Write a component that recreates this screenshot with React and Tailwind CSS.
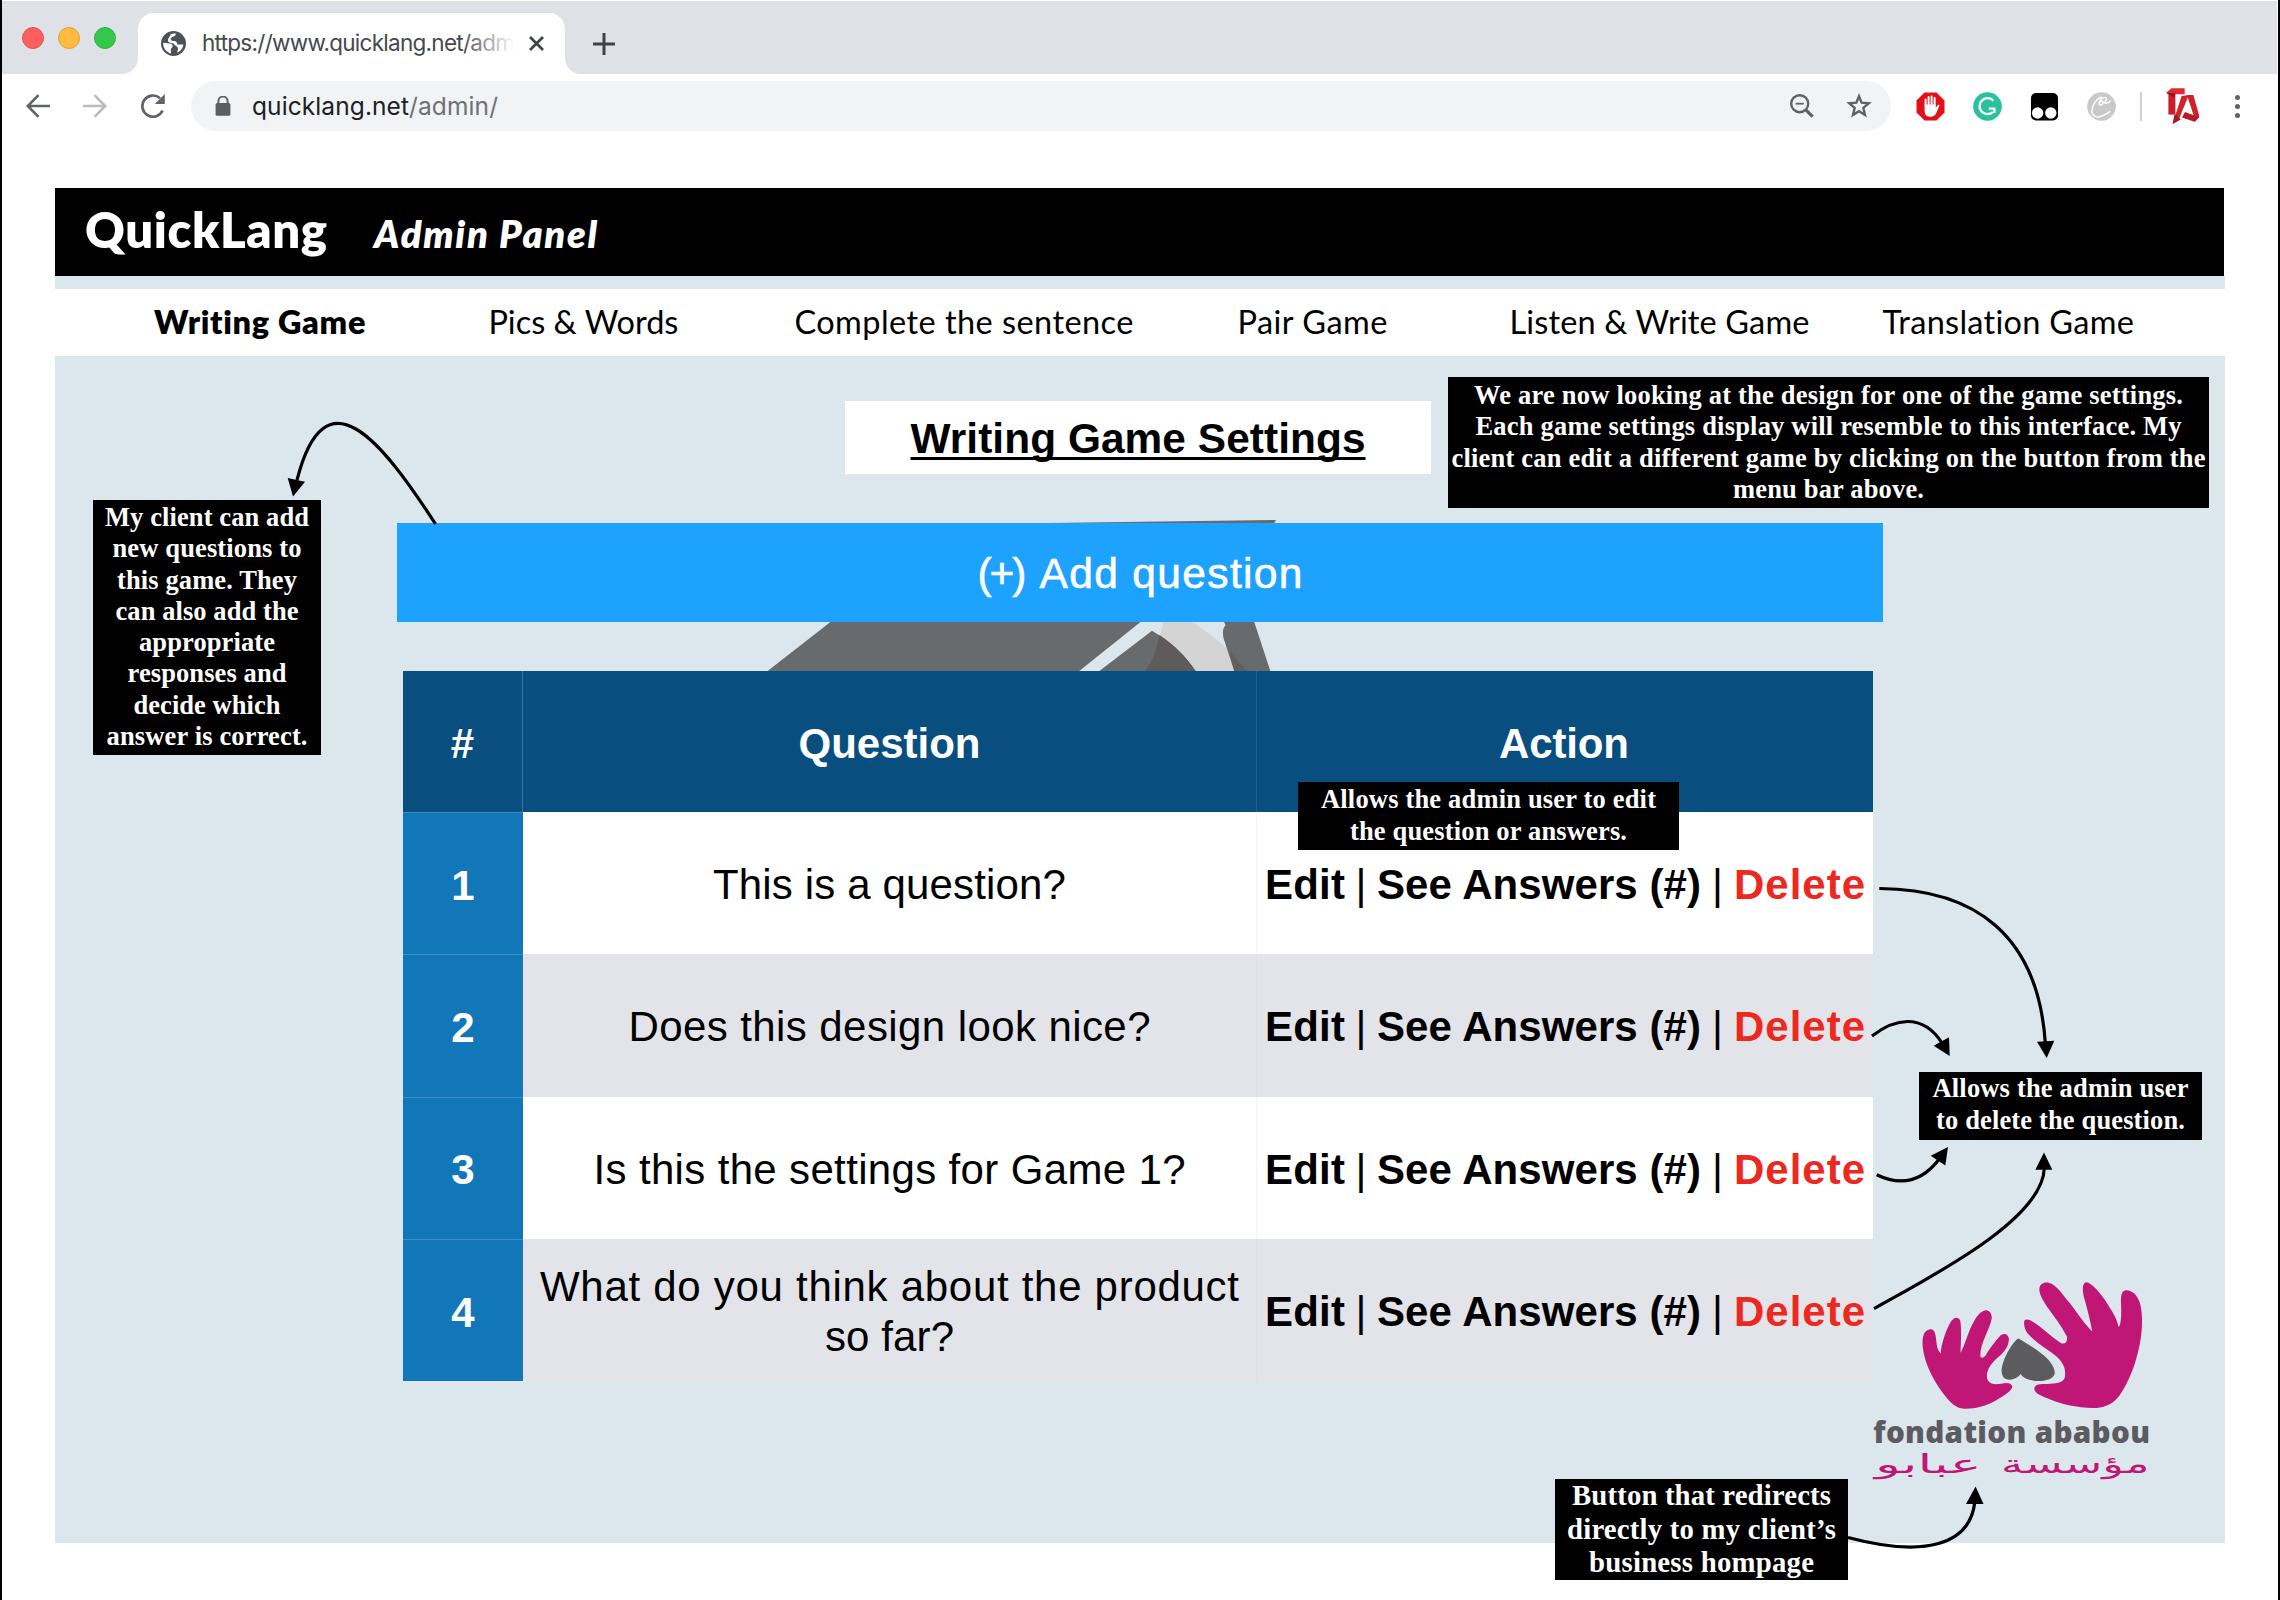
import React, { useLayoutEffect, useRef } from "react";

/* One line of text, tracked so that it spans exactly `w` pixels. */
function Line({ w, className = "", children }) {
  const ref = useRef(null);
  useLayoutEffect(() => {
    const el = ref.current;
    el.style.letterSpacing = "0px";
    el.style.marginRight = "0px";
    const natural = el.getBoundingClientRect().width;
    const gap = (w - natural) / (el.textContent.length - 1);
    el.style.letterSpacing = `${gap}px`;
    el.style.marginRight = `${-gap}px`;
  }, [w]);
  return (
    <span ref={ref} className={`inline-block whitespace-nowrap ${className}`}>
      {children}
    </span>
  );
}

function TabStrip() {
  return (
    <div className="mt-px flex h-[73px] items-end bg-[#dee1e6]">
      <div className="flex h-full w-[136px] items-center gap-[14px] pl-5">
        <span className="size-[22px] rounded-full border border-[#e2504a] bg-[#fc605c]" />
        <span className="size-[22px] rounded-full border border-[#e0a030] bg-[#fdbc40]" />
        <span className="size-[22px] rounded-full border border-[#2bb03c] bg-[#34c84a]" />
      </div>
      <div className="relative flex h-[61px] w-[427px] items-center rounded-t-[16px] bg-white pl-[23px]">
        <svg className="absolute bottom-0 -left-4 size-4" viewBox="0 0 16 16">
          <path d="M16 0V16H0A16 16 0 0 0 16 0Z" fill="#fff" />
        </svg>
        <svg className="absolute -right-4 bottom-0 size-4" viewBox="0 0 16 16">
          <path d="M0 0V16H16A16 16 0 0 1 0 0Z" fill="#fff" />
        </svg>
        <svg className="size-[25px]" viewBox="0 0 25 25">
          <circle cx="12.5" cy="12.5" r="12.5" fill="#4d5157" />
          <path
            d="M2.2 11.8L8.6 12.4C11 12.6 12.2 14 11.6 15.6C11 17 9.6 17.6 9.8 19.4L10 22.4C5.6 21.4 2.2 17.4 2.2 12.5Z"
            fill="#fff"
          />
          <path
            d="M14.8 2.6C14.6 5.4 12.4 5.6 11.4 6C9.8 6.8 9.2 8 10 9.2C11 10.4 13.4 9.4 15 10.4C16.2 11.4 15.6 12.8 17 13.4C18.6 14 20 13 22.4 13.6C22 17.4 19.6 20.4 16.4 21.8C16 19.8 17.4 18.6 17 17C16.4 15.4 14.4 15 13.6 13.8C12.6 12.2 10.6 12.4 8.6 11.6C7 10.8 6.6 9 7.4 7.4C8.2 5.8 9.6 5 9.8 3C11.4 2.4 13 2.3 14.8 2.6Z"
            fill="#fff"
          />
        </svg>
        <div className="relative ml-[16px] w-[312px] overflow-hidden text-[22.5px] leading-[30px] text-[#45494d]">
          <Line w={313} className="font-[Inter,sans-serif]">
            https://www.quicklang.net/adm
          </Line>
          <div className="absolute inset-y-0 right-0 w-[52px] bg-gradient-to-r from-white/0 to-white" />
        </div>
        <svg className="ml-[15px] size-[15px]" viewBox="0 0 15 15">
          <path d="M1 1L14 14M14 1L1 14" stroke="#3f4347" strokeWidth="2.7" />
        </svg>
      </div>
      <svg className="mb-[19px] ml-[28px] size-[22px]" viewBox="0 0 22 22">
        <path d="M11 0V22M0 11H22" stroke="#3f4347" strokeWidth="3" />
      </svg>
    </div>
  );
}

function Toolbar() {
  return (
    <div className="flex h-[64px] items-center bg-white">
      <svg className="ml-[24px] size-6" viewBox="0 0 24 24" fill="none" stroke="#5f6368" strokeWidth="2.6">
        <path d="M24 12H3M12.5 1.2L1.8 12L12.5 22.8" />
      </svg>
      <svg className="ml-[33px] size-6" viewBox="0 0 24 24" fill="none" stroke="#babcbe" strokeWidth="2.6">
        <path d="M0 12H21M11.5 1.2L22.2 12L11.5 22.8" />
      </svg>
      <svg className="ml-[33px] size-[26px]" viewBox="0 0 26 26">
        <path d="M22.6 17.5A10.6 10.6 0 1 1 20 5.2" fill="none" stroke="#5f6368" strokeWidth="2.7" />
        <path d="M24.8 1V11H14.8Z" fill="#5f6368" />
      </svg>
      <div className="ml-[25px] flex h-[50px] w-[1700px] items-center rounded-full bg-[#f1f3f4] pl-[22px]">
        <svg className="size-[20px]" viewBox="0 0 20 20">
          <path d="M5.4 9V5.2a4.6 4.6 0 0 1 9.2 0V9" fill="none" stroke="#5f6368" strokeWidth="2" />
          <rect x="2.6" y="7" width="14.8" height="12.8" rx="1.6" fill="#5b5d60" />
        </svg>
        <div className="ml-[19px] font-[Inter,sans-serif] text-[24.5px] leading-8">
          <Line w={157} className="text-[#202124]">quicklang.net</Line>
          <Line w={89} className="text-[#6d7175]">/admin/</Line>
        </div>
        <svg className="ml-auto size-[24px]" viewBox="0 0 24 24" fill="none" stroke="#5f6368">
          <circle cx="9.7" cy="9.7" r="8.5" strokeWidth="2.4" />
          <path d="M15.6 15.6L22.6 22.6" strokeWidth="3.2" />
          <path d="M5.6 9.7H13.8" strokeWidth="1.8" />
        </svg>
        <svg className="mr-[19px] ml-[32px] size-[26px]" viewBox="0 0 26 26">
          <path
            d="M13 3.2L15.6 9.7L22.8 10.3L17.3 14.9L19 22L13 18.2L7 22L8.7 14.9L3.2 10.3L10.4 9.7Z"
            fill="none"
            stroke="#5f6368"
            strokeWidth="2.4"
          />
        </svg>
      </div>
      <svg className="ml-[25px] size-[29px]" viewBox="0 0 29 29">
        <path d="M8.5 .5H20.5L28.5 8.5V20.5L20.5 28.5H8.5L.5 20.5V8.5Z" fill="#e3101a" />
        <path
          d="M9.6 14.5V7.6M12.6 14V5M15.6 14V4.4M18.6 15V6"
          stroke="#fff"
          strokeWidth="2"
          strokeLinecap="round"
        />
        <path d="M8.6 12.5H19.6V15.6L22.6 12.4L23.6 13.2L20.4 20.8Q18.8 24.8 14.4 24.8Q8.6 24.8 8.6 19Z" fill="#fff" />
      </svg>
      <svg className="ml-[28px] size-[29px]" viewBox="0 0 29 29">
        <circle cx="14.5" cy="14.5" r="14.3" fill="#28c39c" />
        <path
          d="M20.4 8.8A8 8 0 1 0 19.8 20.2M15.8 16.6H21.4V21"
          fill="none"
          stroke="#fff"
          strokeWidth="2.3"
        />
      </svg>
      <svg className="ml-[28px] size-[29px]" viewBox="0 0 29 29">
        <rect x="1" y="1" width="27" height="27.5" rx="5" fill="#000" />
        <circle cx="7.6" cy="21" r="5.7" fill="#fff" />
        <circle cx="20.8" cy="21" r="5.7" fill="#fff" />
      </svg>
      <svg className="ml-[28px] size-[29px]" viewBox="0 0 29 29">
        <circle cx="14.5" cy="14.5" r="14.3" fill="#c9c9c9" />
        <path
          d="M12.6 11.4C12.6 8.8 15.4 8.2 16 10C16.6 12.4 13.4 14 12 12.4C11.2 9.6 15 5.4 18.2 5.4C20.2 5.6 19.4 8.6 17.4 10.8C20 11.6 22.6 10.2 23.8 8.4M15.2 5C9 6.4 4.8 14 5 19.4C5.4 25.4 11.2 26.2 16.4 23.4C19.4 22 21.6 20.6 23.4 19.4"
          fill="none"
          stroke="#fff"
          strokeWidth="1.4"
        />
      </svg>
      <div className="ml-[24px] h-[29px] w-[2px] bg-[#cfd1d4]" />
      <svg className="ml-[24px] h-[38px] w-[34px]" viewBox="0 0 34 38">
        <path d="M.5 5.4L5.4 1.2H18.6V7.2H1.6Z" fill="#dd2a34" />
        <path d="M2.4 7H9.4V27.6H2.4Z" fill="#c81f2b" />
        <path d="M.5 5.6L8 10.2L9.4 6.8Z" fill="#8f131c" />
        <path d="M15.6 9L22.8 8L12.6 33L6.6 37Z" fill="#d4222d" />
        <path d="M6.6 37L8.6 26.8L14.8 32.6Z" fill="#a91722" />
        <path d="M21 8H27.4L33.4 29.6L28.8 34.8L27.2 27Z" fill="#cf202c" />
        <path d="M19 25L33.2 30.2L28.6 34.8L16 30.4Z" fill="#b71925" />
      </svg>
      <div className="ml-[35px] flex flex-col gap-[4px]">
        <span className="size-[5px] rounded-full bg-[#5f6368]" />
        <span className="size-[5px] rounded-full bg-[#5f6368]" />
        <span className="size-[5px] rounded-full bg-[#5f6368]" />
      </div>
    </div>
  );
}

function SiteHeader() {
  return (
    <header className="mr-[54px] ml-[53px] mt-[50px] bg-black">
      <div className="flex h-[88px] items-baseline pt-[11px] pl-[30px] font-[Lato,sans-serif] font-extrabold text-white">
        <Line w={242} className="text-[49px] leading-[60px]">QuickLang</Line>
        <Line w={223} className="ml-[47px] text-[38px] leading-[48px] italic">Admin Panel</Line>
      </div>
    </header>
  );
}

const games = [
  { label: "Writing Game", w: 212, cls: "ml-[99px] font-extrabold" },
  { label: "Pics & Words", w: 190, cls: "ml-[123px]" },
  { label: "Complete the sentence", w: 339, cls: "ml-[116px]" },
  { label: "Pair Game", w: 150, cls: "ml-[104px]" },
  { label: "Listen & Write Game", w: 300, cls: "ml-[122px]" },
  { label: "Translation Game", w: 252, cls: "ml-[73px]" },
];

function GameNav() {
  return (
    <nav className="flex h-[67px] items-center bg-white pb-[1px] font-[Lato,sans-serif] text-[32.5px] text-black">
      {games.map((g) => (
        <div key={g.label} className={g.cls}>
          <Line w={g.w}>{g.label}</Line>
        </div>
      ))}
    </nav>
  );
}

/* Graduation cap that shows between the button and the table. */
function Backdrop() {
  return (
    <svg className="absolute top-[160px] left-[690px] h-[160px] w-[540px]" viewBox="745 516 540 160">
      <path d="M1050 523L1276 520L1273 525H1050Z" fill="#676b6e" />
      <path d="M833 620H1143L1078.6 671.5H767Z" fill="#676b6e" />
      <path d="M1163.4 620H1190C1210 634 1232 650 1248 672H1145C1153 658 1159 645 1163.4 620Z" fill="#d5d4d5" />
      <path d="M1152 630.7C1168 640 1184 654 1196 671.5H1098.7Z" fill="#676b6e" />
      <path d="M1159.5 635C1156 652 1152 662 1145 671.5H1196C1186 656 1174 645 1159.5 635Z" fill="#5f5b5a" />
      <path d="M1223 620H1253.6L1270.5 671.5H1234.4L1223.5 638C1222.4 632 1223 628 1225.5 625Z" fill="#676b6e" />
      <path d="M1229 650L1247 671.5H1234.4Z" fill="#615e5e" />
    </svg>
  );
}

const questions = [
  [["This is a question?", 353]],
  [["Does this design look nice?", 522]],
  [["Is this the settings for Game 1?", 592]],
  [
    ["What do you think about the product", 699],
    ["so far?", 129],
  ],
];

function QuestionTable() {
  return (
    <div className="mt-[49px] ml-[348px] w-[1470px] text-[42px] leading-[50px]">
      <div className="grid h-[141px] grid-cols-[120px_734px_616px] items-stretch bg-[#084f80] font-bold text-white">
        <div className="flex items-center justify-center border-r border-[#3a739a] pt-1">#</div>
        <div className="flex items-center justify-center border-r border-[#235f8a] pt-1">
          <Line w={182}>Question</Line>
        </div>
        <div className="flex items-center justify-center pt-1 pr-[2px]">
          <Line w={130}>Action</Line>
        </div>
      </div>
      {questions.map((lines, i) => (
        <div key={i} className="grid h-[142.3px] grid-cols-[120px_734px_616px]">
          <div className="flex items-center justify-center border-t border-[#3f8fc6] bg-[#1177b9] pt-1 font-bold text-white">
            {i + 1}
          </div>
          <div
            className={`flex flex-col items-center justify-center border-r pt-1 text-black ${
              i % 2 ? "border-[#dfe0e5] bg-[#e3e4e9]" : "border-[#f5f5f7] bg-white"
            }`}
          >
            {lines.map(([text, w]) => (
              <Line key={text} w={w}>{text}</Line>
            ))}
          </div>
          <div
            className={`flex items-center pt-1 pl-[8px] font-bold text-black ${
              i % 2 ? "bg-[#e3e4e9]" : "bg-white"
            }`}
          >
            <Line w={80}>Edit</Line>
            <span className="w-[32px] text-center font-normal">|</span>
            <Line w={324}>See Answers (#)</Line>
            <span className="w-[33px] text-center font-normal">|</span>
            <Line w={131} className="text-[#ec281f]">Delete</Line>
          </div>
        </div>
      ))}
    </div>
  );
}

function Note({ className, lines }) {
  return (
    <div
      className={`absolute flex flex-col items-center bg-black font-['Liberation_Serif',serif] font-bold text-white ${className}`}
    >
      {lines.map(([text, w]) => (
        <Line key={text} w={w}>{text}</Line>
      ))}
    </div>
  );
}

function Notes() {
  return (
    <>
      <Note
        className="top-[500px] left-[93px] h-[255px] w-[228px] pt-[2px] text-[26.5px] leading-[31.3px]"
        lines={[
          ["My client can add", 204],
          ["new questions to", 189],
          ["this game. They", 180],
          ["can also add the", 183],
          ["appropriate", 136],
          ["responses and", 159],
          ["decide which", 147],
          ["answer is correct.", 201],
        ]}
      />
      <Note
        className="top-[377px] left-[1448px] h-[131px] w-[761px] pt-[3px] text-[26.5px] leading-[31.4px]"
        lines={[
          ["We are now looking at the design for one of the game settings.", 709],
          ["Each game settings display will resemble to this interface. My", 706],
          ["client can edit a different game by clicking on the button from the", 754],
          ["menu bar above.", 191],
        ]}
      />
      <Note
        className="top-[782px] left-[1298px] h-[68px] w-[381px] pt-[2px] text-[26.5px] leading-[31.5px]"
        lines={[
          ["Allows the admin user to edit", 335],
          ["the question or answers.", 277],
        ]}
      />
      <Note
        className="top-[1072px] left-[1919px] h-[68px] w-[283px] pt-[1px] text-[26.5px] leading-[31.5px]"
        lines={[
          ["Allows the admin user", 256],
          ["to delete the question.", 249],
        ]}
      />
      <Note
        className="top-[1479px] left-[1555px] h-[101px] w-[293px] text-[28.8px] leading-[33.5px]"
        lines={[
          ["Button that redirects", 259],
          ["directly to my client’s", 269],
          ["business hompage", 225],
        ]}
      />
    </>
  );
}

function Arrows() {
  return (
    <svg className="pointer-events-none absolute top-0 left-0 h-[1600px] w-[2280px]" viewBox="0 0 2280 1600">
      <g fill="none" stroke="#000" strokeWidth="3.2">
        <path d="M435.5 524C381 440 325 370 297 480" />
        <path d="M1879.3 888.5C1975 889 2038 935 2045.3 1043" />
        <path d="M1872 1036C1894 1019 1922 1012 1942 1043" />
        <path d="M1876.7 1174.7C1900 1186 1921 1183 1939.3 1159" />
        <path d="M1874 1308.7C1930 1277 2043 1220 2044.3 1168" />
        <path d="M1848 1537.5C1925 1558 1970 1545 1974.8 1502" />
      </g>
      <g fill="#000">
        <path d="M293 496.5L287.7 478L305 481.7Z" />
        <path d="M2046.7 1058L2037 1041.7L2054.3 1040.7Z" />
        <path d="M1949.7 1056L1933.7 1045.7L1949 1037.3Z" />
        <path d="M1948 1147L1930.7 1155.7L1945.3 1165.5Z" />
        <path d="M2044 1152.5L2035.3 1169.7L2052.3 1169.7Z" />
        <path d="M1975.6 1486.5L1966 1503.9L1983.5 1503.9Z" />
      </g>
    </svg>
  );
}

function FoundationLogo() {
  return (
    <svg className="absolute top-[1250px] left-[1840px] h-[240px] w-[360px]" viewBox="0 0 1080 720">
      <g fill="#c01776">
        <path d="M248 290C246 262 250 240 272 238C288 238 287 262 291 288C294 302 300 308 302 310C304 280 318 240 332 216C340 202 352 198 360 210C366 230 362 290 362 308C376 284 384 244 402 214C414 192 428 180 440 181C452 184 456 194 455 206C450 236 420 280 421 318C422 326 432 324 438 314C452 292 470 268 482 256C494 248 504 252 507 266C506 292 492 306 474 322C452 342 438 362 441 384C446 404 464 404 484 401C500 397 514 398 517 410C514 424 492 436 470 450C440 468 400 478 372 476C346 474 334 458 322 446C288 404 254 348 248 290Z" />
        <path d="M598 118C598 102 612 95 626 98C650 104 666 132 690 160C712 190 738 228 757 244C752 220 746 190 734 150C726 122 726 100 738 97C756 98 784 132 804 164C820 190 832 208 835 230C842 232 845 200 843 160C842 134 846 120 860 121C884 124 896 142 902 168C910 210 906 260 894 306C884 350 864 400 840 434C822 460 800 470 770 474C720 476 660 462 620 444C596 434 582 428 583 414C586 402 600 402 622 402C646 400 668 400 674 384C680 356 668 336 648 318C622 298 590 280 568 256C556 244 550 226 553 212C560 204 576 212 594 226C618 244 644 268 664 280C678 284 684 272 680 258C664 228 640 196 622 172C608 150 598 134 598 118Z" />
      </g>
      <path
        d="M537 266C560 280 600 304 620 324C636 340 646 358 644 372C638 388 616 394 588 393C568 391 548 384 542 372C534 382 520 390 506 389C490 388 484 376 485 356C488 334 504 300 520 280C528 272 532 264 537 266Z"
        fill="#5c5b60"
      />
      <text
        x="100"
        y="580"
        textLength="830"
        className="font-['Open_Sans',sans-serif] text-[89px] font-extrabold"
        fill="#5c5b60"
      >
        fondation ababou
      </text>
      <text
        x="928"
        y="670"
        direction="rtl"
        textLength="445"
        lengthAdjust="spacingAndGlyphs"
        className="font-['DejaVu_Sans',sans-serif] text-[78px]"
        fill="#c01776"
      >
        مؤسسة
      </text>
      <text
        x="425"
        y="670"
        direction="rtl"
        textLength="320"
        lengthAdjust="spacingAndGlyphs"
        className="font-['DejaVu_Sans',sans-serif] text-[78px]"
        fill="#c01776"
      >
        عبابو
      </text>
    </svg>
  );
}

export default function App() {
  return (
    <div className="relative h-[1600px] w-[2280px] overflow-hidden border-x-2 border-black bg-white font-['Liberation_Sans',sans-serif]">
      <div className="mr-px">
        <TabStrip />
        <Toolbar />
      </div>
      <SiteHeader />
      <main className="ml-[53px] h-[1267px] w-[2170px] bg-[#dce7ed] pt-[13px]">
        <GameNav />
        <section className="relative h-[1187px] pt-[45px]">
          <Backdrop />
          <div className="relative">
            <h1 className="ml-[790px] flex h-[73px] w-[586px] items-center justify-center bg-white pt-[2px] text-[42.4px] font-bold text-black">
              <Line w={455} className="underline decoration-[2.5px] underline-offset-[4px] [text-decoration-skip-ink:none]">
                Writing Game Settings
              </Line>
            </h1>
            <button className="mt-[49px] ml-[342px] flex h-[99px] w-[1486px] items-center justify-center gap-[13px] bg-[#1ea2ff] pt-[2px] text-[42.5px] text-white [-webkit-text-stroke:0.6px_white]">
              <Line w={49}>(+)</Line>
              <Line w={263}>Add question</Line>
            </button>
            <QuestionTable />
          </div>
        </section>
      </main>
      <div className="absolute top-0 -left-[2px]">
        <FoundationLogo />
        <Notes />
        <Arrows />
      </div>
    </div>
  );
}
